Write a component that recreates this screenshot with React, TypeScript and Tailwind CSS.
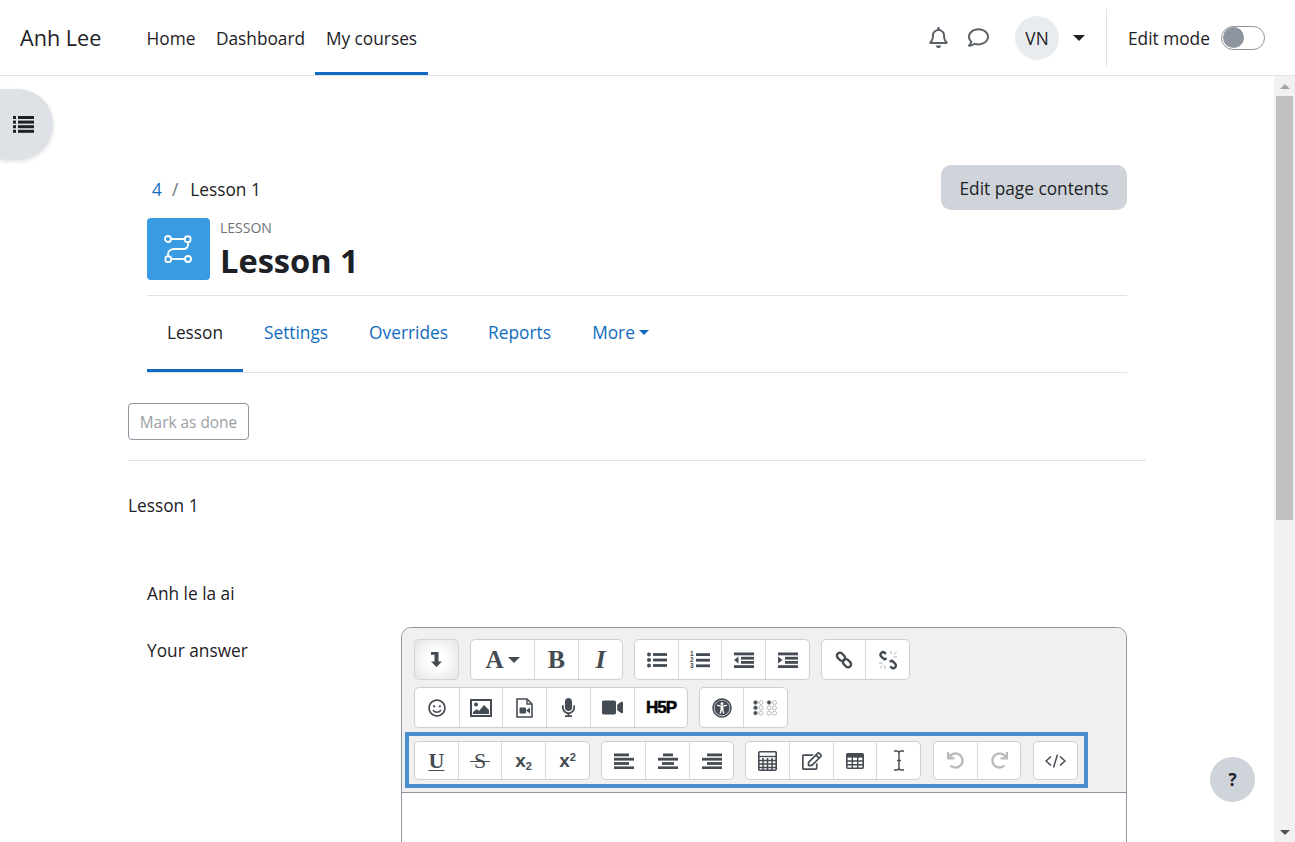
import type { ReactNode } from "react";
import {
  FaRegBell,
  FaRegComment,
  FaRegSmile,
  FaMicrophone,
  FaVideo,
  FaUniversalAccess,
  FaRegEdit,
  FaUndo,
  FaRedo,
} from "react-icons/fa";

const dark = "#444b53";

function Lines({ rows }: { rows: [number, number][] }) {
  return (
    <svg width="20" height="16" viewBox="0 0 20 16" fill={dark}>
      {rows.map(([x, w], i) => (
        <rect key={i} x={x} y={0.5 + i * 4.3} width={w} height="2.8" />
      ))}
    </svg>
  );
}

function ListUl() {
  return (
    <svg width="20" height="16" viewBox="0 0 20 16" fill={dark}>
      {[2.5, 8, 13.5].map((y) => (
        <g key={y}>
          <circle cx="2" cy={y} r="2" />
          <rect x="6" y={y - 1.4} width="14" height="2.8" />
        </g>
      ))}
    </svg>
  );
}

function ListOl() {
  return (
    <svg width="20" height="20" viewBox="0 0 20 20" fill={dark}>
      {[1, 2, 3].map((n, i) => (
        <g key={n}>
          <text x="0" y={5.5 + i * 6} fontSize="6.5" fontWeight="700" fontFamily="Liberation Sans">
            {n}
          </text>
          <rect x="6" y={3.2 + i * 5.6} width="14" height="2.8" />
        </g>
      ))}
    </svg>
  );
}

function Indent({ out }: { out?: boolean }) {
  return (
    <svg width="20" height="16" viewBox="0 0 20 16" fill={dark}>
      <rect x="0" y="0.500" width="20" height="2.800" />
      <rect x="7" y="4.800" width="13" height="2.800" />
      <rect x="7" y="9" width="13" height="2.800" />
      <rect x="0" y="13.200" width="20" height="2.800" />
      <path d={out ? "M4.500 4.500v7L0 8z" : "M0 4.500v7L4.500 8z"} />
    </svg>
  );
}

function LinkIcon() {
  return (
    <svg width="18" height="18" viewBox="0 0 18 18" fill="none" stroke={dark} strokeWidth="2.400">
      <rect x="1.500" y="2.800" width="9" height="6" rx="3" transform="rotate(45 6 5.800)" />
      <rect x="7.500" y="9.200" width="9" height="6" rx="3" transform="rotate(45 12 12.200)" />
    </svg>
  );
}

function Unlink() {
  return (
    <svg width="20" height="20" viewBox="0 0 20 20" fill="none" stroke={dark} strokeWidth="2.400">
      <path d="M8 3.800 6.800 2.800a2.600 2.600 0 0 0-3.700 3.600l3.200 3 2.400-1" />
      <path d="M12.200 16.400l1.200 1a2.600 2.600 0 0 0 3.700-3.700l-3.200-3-2.200 1" />
      <path d="M13 1v3M16 4.500l2.500-2.500M15.500 7H19M1 13h3.500M2 18l2.500-2.500M7 15.500V19" stroke="#a9adb2" strokeWidth="1" />
    </svg>
  );
}

function ImageIcon() {
  return (
    <svg width="22" height="18" viewBox="0 0 22 18">
      <rect x="1" y="1" width="20" height="16" fill="#fff" stroke={dark} strokeWidth="2" />
      <circle cx="6" cy="5.500" r="2" fill={dark} />
      <path d="M3 15v-2l4-3 2 2 5-6 5 5v4z" fill={dark} />
    </svg>
  );
}

function FileVideo() {
  return (
    <svg width="17" height="20" viewBox="0 0 17 20">
      <path d="M1 1h10l5 5v13H1z" fill="#fff" stroke={dark} strokeWidth="1.600" />
      <path d="M11 1v5h5" fill="none" stroke={dark} strokeWidth="1.400" />
      <rect x="3.500" y="9.500" width="6.500" height="6" rx="1" fill={dark} />
      <path d="M10 12.500l4-3v6z" fill={dark} />
    </svg>
  );
}

function Braille() {
  const left = [true, true, true, false, false, false];
  const right = [true, false, false, false, false, false];
  return (
    <svg width="26" height="16" viewBox="0 0 26 16">
      {[0, 1].map((col) =>
        [0, 1, 2].map((row) => (
          <g key={`${col}${row}`}>
            <circle
              cx={2.500 + col * 5.500}
              cy={2.500 + row * 5.300}
              r="2"
              fill={left[col * 3 + row] ? dark : "#fff"}
              stroke="#9b9fa4"
              strokeWidth="0.700"
            />
            <circle
              cx={16 + col * 5.500}
              cy={2.500 + row * 5.300}
              r="2"
              fill={right[col * 3 + row] ? dark : "#fff"}
              stroke="#9b9fa4"
              strokeWidth="0.700"
            />
          </g>
        ))
      )}
    </svg>
  );
}

function Calculator() {
  return (
    <svg width="19" height="20" viewBox="0 0 19 20" fill="none" stroke={dark}>
      <rect x="0.800" y="0.800" width="17.400" height="18.400" rx="1" strokeWidth="1.600" />
      <path d="M1 5.500h17" strokeWidth="1.400" />
      <path d="M5 7v12M9.500 7v12M14 7v12M1 9.500h17M1 13h17M1 16.500h17" strokeWidth="1.500" />
    </svg>
  );
}

function TableIcon() {
  return (
    <svg width="18" height="16" viewBox="0 0 18 16" fill="none" stroke={dark}>
      <rect x="0.800" y="0.800" width="16.400" height="14.400" rx="1" strokeWidth="1.600" />
      <rect x="1" y="1" width="16" height="3.600" fill={dark} stroke="none" />
      <path d="M6.300 4v11M11.700 4v11M1 8h16M1 11.700h16" strokeWidth="1.400" />
    </svg>
  );
}

function CursorIcon() {
  return (
    <svg width="12" height="21" viewBox="0 0 12 21" fill="none" stroke={dark} strokeWidth="1.400">
      <path d="M1 1h2.500C5 1 6 1.500 6 3v15c0 1.500 1 2 2.500 2H11M11 1H8.500C7 1 6 1.500 6 3M1 20h2.500C5 20 6 19.500 6 18" />
      <path d="M4 10.500h4" />
    </svg>
  );
}

function CodeIcon() {
  return (
    <svg width="21" height="14" viewBox="0 0 21 14" fill="none" stroke={dark} strokeWidth="1.500">
      <path d="M6 2.500 1 7l5 4.500M15 2.500 20 7l-5 4.500M12.500.5l-4 13" />
    </svg>
  );
}

function LevelDown() {
  return (
    <svg width="11" height="15" viewBox="0 0 11 15" fill={dark}>
      <path d="M0 0h7.500v9.500H11l-5.500 5.500L0 9.500h3.500V2.800H0z" />
    </svg>
  );
}

function Serif({ children, className = "" }: { children: ReactNode; className?: string }) {
  return (
    <span className={`font-['Liberation_Serif',serif] text-[#444b53] leading-none ${className}`}>{children}</span>
  );
}

function Sup({ sub }: { sub?: boolean }) {
  return (
    <span className="font-['Liberation_Sans',sans-serif] font-bold text-[19px] leading-none text-[#444b53]">
      x
      <span className={`text-[11px] relative ${sub ? "top-[3px]" : "-top-[6px]"}`}>2</span>
    </span>
  );
}

type Btn = { w: number; icon: ReactNode };

function Group({ items, className = "" }: { items: Btn[]; className?: string }) {
  return (
    <div className={`flex bg-white border border-[#cfcfcf] rounded-[5px] ${className}`}>
      {items.map((b, i) => (
        <div
          key={i}
          style={{ width: b.w }}
          className={`h-full flex items-center justify-center ${i > 0 ? "border-l border-[#d9d9d9]" : ""}`}
        >
          {b.icon}
        </div>
      ))}
    </div>
  );
}

const row1 = [
  [
    {
      w: 63,
      icon: (
        <span className="flex items-center gap-1">
          <Serif className="font-bold text-[25px]">A</Serif>
          <span className="border-x-[6px] border-x-transparent border-t-[6px] border-t-[#444b53]" />
        </span>
      ),
    },
    { w: 44, icon: <Serif className="font-bold text-[26px]">B</Serif> },
    { w: 44, icon: <Serif className="font-bold italic text-[26px]">I</Serif> },
  ],
  [
    { w: 43, icon: <ListUl /> },
    { w: 43, icon: <ListOl /> },
    { w: 44, icon: <Indent out /> },
    { w: 44, icon: <Indent /> },
  ],
  [
    { w: 43, icon: <LinkIcon /> },
    { w: 44, icon: <Unlink /> },
  ],
];

const row2 = [
  [
    { w: 44, icon: <FaRegSmile size={18} color={dark} /> },
    { w: 43, icon: <ImageIcon /> },
    { w: 44, icon: <FileVideo /> },
    { w: 44, icon: <FaMicrophone size={19} color={dark} /> },
    { w: 44, icon: <FaVideo size={21} color={dark} /> },
    {
      w: 53,
      icon: (
        <span className="font-['Liberation_Sans',sans-serif] font-bold text-[17px] tracking-[-1px] text-black leading-none [-webkit-text-stroke:0.5px_black]">
          H5P
        </span>
      ),
    },
  ],
  [
    { w: 43, icon: <FaUniversalAccess size={20} color={dark} /> },
    { w: 44, icon: <Braille /> },
  ],
];

const row3 = [
  [
    { w: 43, icon: <Serif className="font-bold text-[22px] underline decoration-1 underline-offset-2">U</Serif> },
    {
      w: 43,
      icon: (
        <span className="relative flex items-center justify-center w-[20px]">
          <Serif className="text-[22px]">S</Serif>
          <span className="absolute left-0 right-0 top-1/2 h-px bg-[#444b53]" />
        </span>
      ),
    },
    { w: 44, icon: <Sup sub /> },
    { w: 44, icon: <Sup /> },
  ],
  [
    { w: 43, icon: <Lines rows={[[0, 15], [0, 20], [0, 15], [0, 20]]} /> },
    { w: 44, icon: <Lines rows={[[5, 10], [0, 20], [4, 12], [0, 20]]} /> },
    { w: 44, icon: <Lines rows={[[5, 15], [0, 20], [5, 15], [0, 20]]} /> },
  ],
  [
    { w: 43, icon: <Calculator /> },
    { w: 44, icon: <FaRegEdit size={20} color={dark} /> },
    { w: 43, icon: <TableIcon /> },
    { w: 44, icon: <CursorIcon /> },
  ],
  [
    { w: 43, icon: <FaUndo size={17} color="#bbbbbb" /> },
    { w: 43, icon: <FaRedo size={17} color="#bbbbbb" /> },
  ],
  [{ w: 43, icon: <CodeIcon /> }],
];

function Toolbar() {
  return (
    <div className="bg-[#f0f0f0] border-b border-[#8f959e] rounded-t-[10px] pl-[12px] pt-[11px] h-[165px]">
      <div className="flex gap-[11px] h-[41px]">
        <div className="w-[45px] h-full rounded-[5px] border border-[#d4d4d4] bg-[radial-gradient(circle,#ffffff_30%,#e4e4e4_100%)] flex items-center justify-center">
          <LevelDown />
        </div>
        {row1.map((g, i) => (
          <Group key={i} items={g} />
        ))}
      </div>
      <div className="flex gap-[11px] h-[41px] mt-[7px]">
        {row2.map((g, i) => (
          <Group key={i} items={g} />
        ))}
      </div>
      <div className="relative flex gap-[11px] h-[39px] mt-[13px]">
        {row3.map((g, i) => (
          <Group key={i} items={g} className={i >= 3 ? "ml-[1px]" : ""} />
        ))}
        <div className="absolute -left-[9px] -top-[9px] w-[683px] h-[56px] border-4 border-[#4a8fce]" />
      </div>
    </div>
  );
}

function LessonIcon() {
  return (
    <svg width="32" height="32" viewBox="0 0 32 32" fill="none" stroke="#fff" strokeWidth="1.800">
      <circle cx="5" cy="6" r="3" />
      <rect x="22" y="3.500" width="5.500" height="5.500" rx="1.500" />
      <path d="M8 6h14M25 9v3c0 2-2 4-4 4H11c-3 0-6 2-6 5v2.500" />
      <rect x="2.500" y="23.500" width="5.500" height="5.500" rx="1.500" />
      <circle cx="25" cy="26" r="3" />
      <path d="M8 26h14" />
    </svg>
  );
}

function SidebarList() {
  return (
    <svg width="21" height="17" viewBox="0 0 21 17" fill="#1d2125">
      {[0, 1, 2, 3].map((i) => (
        <g key={i}>
          <rect x="0" y={i * 4.600} width="3" height="3" />
          <rect x="5" y={i * 4.600} width="16" height="3" />
        </g>
      ))}
    </svg>
  );
}

function Scrollbar() {
  return (
    <div className="w-[21px] h-full bg-[#f1f1f1] flex flex-col items-center">
      <div className="h-[20px] flex items-center justify-center">
        <span className="border-x-[5px] border-x-transparent border-b-[5px] border-b-[#a3a3a3]" />
      </div>
      <div className="w-[17px] h-[424px] bg-[#c1c1c1]" />
      <div className="flex-1" />
      <div className="h-[20px] flex items-center justify-center">
        <span className="border-x-[5px] border-x-transparent border-t-[5px] border-t-[#505050]" />
      </div>
    </div>
  );
}

export default function App() {
  return (
    <div className="relative h-[842px] overflow-hidden bg-white text-[#1d2125] font-['Open_Sans',sans-serif] text-[17.3px] leading-[24px] flex flex-col">
      <header className="h-[76px] shrink-0 border-b border-[#dee2e6] flex items-stretch pl-[20px] pr-[30px]">
        <div className="self-center text-[21.6px] w-[116px]">Anh Lee</div>
        <nav className="flex">
          <a className="w-[70px] flex items-center justify-center pt-[2px]">Home</a>
          <a className="w-[109px] flex items-center justify-center pt-[2px]">Dashboard</a>
          <a className="w-[113px] flex items-center justify-center border-b-[3px] border-[#0f6cbf] pt-[5px]">My courses</a>
        </nav>
        <div className="flex-1" />
        <div className="flex items-center">
          <FaRegBell size={21} color="#5b6167" />
          <FaRegComment size={21} color="#5b6167" className="ml-[19px]" />
          <div className="ml-[26px] w-[44px] h-[44px] rounded-full bg-[#e9ecef] flex items-center justify-center pt-[2px]">VN</div>
          <span className="ml-[14px] border-x-[6px] border-x-transparent border-t-[6px] border-t-[#1d2125]" />
          <div className="ml-[21px] w-px h-[57px] bg-[#dee2e6]" />
          <span className="ml-[21px] w-[84px] whitespace-nowrap pt-[2px]">Edit mode</span>
          <div className="ml-[9px] w-[44px] h-[24px] rounded-full border border-[#8f959e] flex items-center pl-[1px]">
            <div className="w-[21px] h-[21px] rounded-full bg-[#8f959e]" />
          </div>
        </div>
      </header>

      <div className="flex flex-1 min-h-0">
        <main className="flex-1 min-w-0 overflow-hidden pl-[128px]">
          <div className="w-[1018px]">
            <div className="px-[19px] pt-[89px]">
              <div className="flex items-center justify-between w-[980px]">
                <div className="flex items-center pl-[5px] pt-[5px]">
                  <span className="text-[#0f6cbf]">4</span>
                  <span className="ml-[10px] mr-[12px] text-[#6a737b]">/</span>
                  <span>Lesson 1</span>
                </div>
                <div className="w-[186px] h-[45px] rounded-[10px] bg-[#ced4da] flex items-center justify-center pt-[2px]">
                  Edit page contents
                </div>
              </div>
              <div className="flex mt-[8px] h-[62px]">
                <div className="w-[63px] h-[62px] rounded-[4px] bg-[#399be2] flex items-center justify-center">
                  <LessonIcon />
                </div>
                <div className="ml-[10px]">
                  <div className="text-[14px] leading-[20px] text-[#6a737b]">LESSON</div>
                  <h1 className="text-[32.6px] leading-[46px] font-bold">Lesson 1</h1>
                </div>
              </div>
              <div className="mt-[15px] border-t border-b border-[#dee2e6] h-[78px] flex text-[#0f6cbf]">
                <a className="w-[96px] flex items-center justify-center text-[#1d2125] border-b-[3px] border-[#0f6cbf]">Lesson</a>
                <a className="w-[106px] flex items-center justify-center pb-[3px]">Settings</a>
                <a className="w-[119px] flex items-center justify-center pb-[3px]">Overrides</a>
                <a className="w-[103px] flex items-center justify-center pb-[3px]">Reports</a>
                <a className="w-[99px] flex items-center justify-center gap-[4px] pb-[3px]">
                  More
                  <span className="border-x-[5px] border-x-transparent border-t-[5px] border-t-[#0f6cbf]" />
                </a>
              </div>
            </div>

            <div className="mt-[30px] w-[121px] h-[37px] border border-[#8f959e] rounded-[4px] text-[15.4px] text-[#9aa0a6] flex items-center justify-center pt-[2px]">
              Mark as done
            </div>
            <div className="mt-[20px] border-t border-[#dee2e6]" />
            <p className="mt-[33px]">Lesson 1</p>

            <div className="pl-[19px]">
              <p className="mt-[64px]">Anh le la ai</p>
              <div className="flex mt-[21px]">
                <div className="w-[254px] pt-[12px]">Your answer</div>
                <div className="w-[726px] h-[300px] border border-[#8f959e] rounded-t-[10px] bg-white">
                  <Toolbar />
                </div>
              </div>
            </div>
          </div>
        </main>
        <Scrollbar />
      </div>

      {/* floating buttons */}
      <div className="absolute left-0 top-[89px] w-[53px] h-[70px] rounded-r-full bg-[#dee2e6] shadow-[0_2px_4px_rgba(0,0,0,0.15)] flex items-center pl-[13px]">
        <SidebarList />
      </div>
      <div className="absolute left-[1210px] top-[757px] w-[45px] h-[45px] rounded-full bg-[#ced4da] flex items-center justify-center font-bold">
        ?
      </div>
    </div>
  );
}
